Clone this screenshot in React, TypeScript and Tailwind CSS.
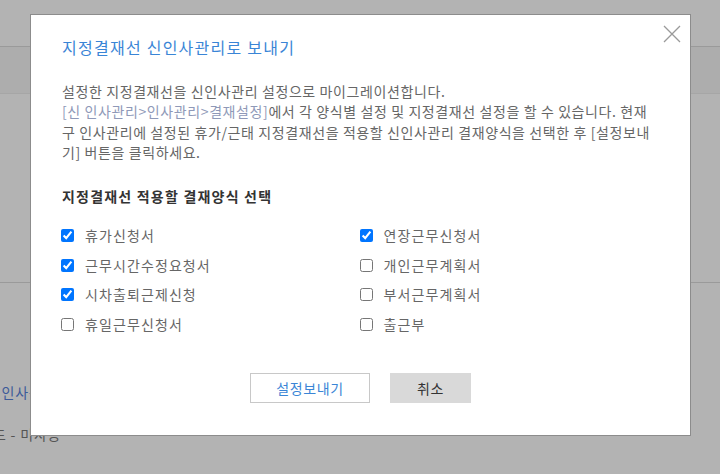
const forms = [
  { label: "휴가신청서", checked: true },
  { label: "연장근무신청서", checked: true },
  { label: "근무시간수정요청서", checked: true },
  { label: "개인근무계획서", checked: false },
  { label: "시차출퇴근제신청", checked: true },
  { label: "부서근무계획서", checked: false },
  { label: "휴일근무신청서", checked: false },
  { label: "출근부", checked: false },
];

function FormCheck({ label, checked }: { label: string; checked: boolean }) {
  return (
    <label className="flex h-[29.5px] items-center gap-[11px] -ml-px">
      <input
        type="checkbox"
        defaultChecked={checked}
        className="h-[13px] w-[13px] accent-[#0075ff]"
      />
      <span className="text-[14px] tracking-[1.1px] text-[#666]">{label}</span>
    </label>
  );
}

export default function App() {
  return (
    <div
      className="relative h-[474px] w-full overflow-hidden bg-[#b3b3b3]"
      style={{ fontFamily: '"Noto Sans CJK KR", "Noto Sans", sans-serif' }}
    >
      {/* dimmed page behind the dialog */}
      <div className="h-[47px] border-b border-[#9a9a9a]" />
      <div className="h-[47px] border-b border-[#a6a6a6] bg-[#adadad]" />
      <div className="h-[189px] border-b border-[#9a9a9a]" />
      <div className="mt-[99px] -ml-[16px] whitespace-nowrap text-[14px] leading-[20px] tracking-[0.8px] text-[#3d5a99]">
        신 인사관리
      </div>
      <div className="mt-[22px] -ml-[7px] whitespace-nowrap text-[14px] leading-[20px] tracking-[0.8px] text-[#555]">
        드 - 미사용
      </div>

      {/* dialog */}
      <div className="absolute left-[30px] top-[14px] w-[661px] border border-[#8c8c8c] bg-white px-[31px] pb-[32px] pt-[20px]">
        <button className="absolute right-[9px] top-[10px] text-[#9a9a9a]">
          <svg width="18" height="18" viewBox="0 0 18 18" fill="none" stroke="currentColor" strokeWidth="1.3">
            <path d="M1 1L17 17M17 1L1 17" />
          </svg>
        </button>

        <h2 className="text-[16px] leading-[24px] tracking-[1.25px] text-[#3a85d6]">
          지정결재선 신인사관리로 보내기
        </h2>

        <p className="mt-[22px] whitespace-nowrap text-[14px] leading-[20.3px] tracking-[0.6px] text-[#666]">
          설정한 지정결재선을 신인사관리 설정으로 마이그레이션합니다.
          <br />
          <span className="text-[#8f99b8]">[신 인사관리&gt;인사관리&gt;결재설정]</span>에서 각 양식별 설정 및
          지정결재선 설정을 할 수 있습니다. 현재
          <br />
          구 인사관리에 설정된 휴가/근태 지정결재선을 적용할 신인사관리 결재양식을 선택한 후 [설정보내
          <br />
          기] 버튼을 클릭하세요.
        </p>

        <h3 className="mt-[24px] text-[14px] font-bold leading-[20px] tracking-[1.2px] text-[#333]">
          지정결재선 적용할 결재양식 선택
        </h3>

        <div className="mt-[15px] grid grid-cols-2">
          {forms.map((f) => (
            <FormCheck key={f.label} label={f.label} checked={f.checked} />
          ))}
        </div>

        <div className="mt-[34px] flex justify-center gap-[20px]">
          <button className="h-[30px] w-[120px] border border-[#c8c8c8] bg-white text-[14px] tracking-[0.6px] text-[#3a85d6]">
            설정보내기
          </button>
          <button className="h-[30px] w-[81px] bg-[#d9d9d9] text-[14px] tracking-[0.6px] text-[#333]">취소</button>
        </div>
      </div>
    </div>
  );
}
